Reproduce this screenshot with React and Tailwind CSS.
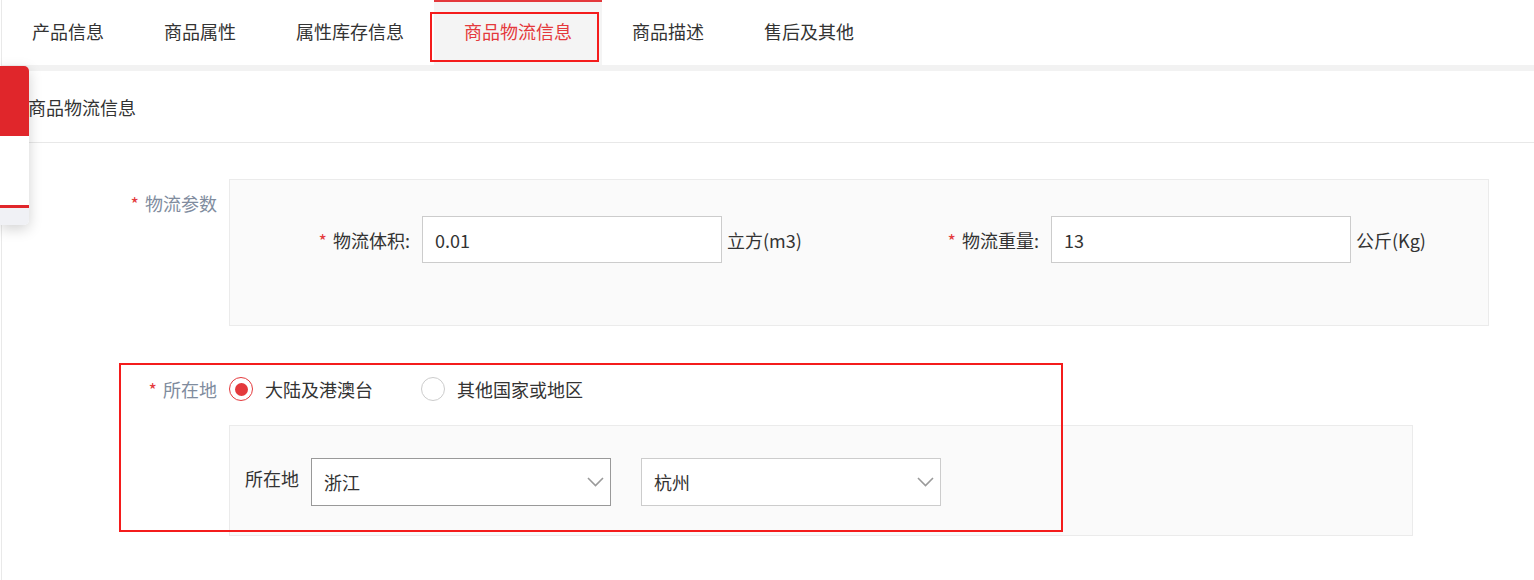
const tabs = ['产品信息', '商品属性', '属性库存信息', '商品物流信息', '商品描述', '售后及其他'];

function Chevron() {
  return (
    <svg width="17" height="10" viewBox="0 0 17 10" fill="none">
      <polyline points="1,1 8.5,8.5 16,1" stroke="#9a9a9a" strokeWidth="1.6" />
    </svg>
  );
}

function Req() {
  return <span className="text-[#e4393c] mr-[6px]">*</span>;
}

function Field({ label, value, unit }) {
  return (
    <div className="w-[629px] flex items-center">
      <div className="w-[180px] text-right text-[#333]">
        <Req />
        {label}:
      </div>
      <div className="ml-[12px] w-[300px] h-[47px] border border-[#cccccc] bg-white pl-[12px] flex items-center text-[#333]">
        {value}
      </div>
      <span className="ml-[5px] text-[#333]">{unit}</span>
    </div>
  );
}

function Select({ value, dark }) {
  return (
    <div
      className={`w-[300px] h-[48px] bg-white border flex items-center justify-between pl-[12px] pr-[6px] text-[#333] ${dark ? 'border-[#999999]' : 'border-[#cccccc]'}`}
    >
      <span>{value}</span>
      <Chevron />
    </div>
  );
}

export default function App() {
  return (
    <div
      className="relative w-[1534px] h-[580px] bg-white overflow-hidden text-[18px] leading-[24px]"
      style={{ fontFamily: '"Noto Sans CJK SC", "Noto Sans", sans-serif' }}
    >
      <div className="ml-px border-l border-[#e9e9e9] h-full">
        {/* tabs */}
        <div className="h-[65px] flex">
          {tabs.map((t, i) => (
            <div
              key={t}
              className={`h-full px-[30px] flex items-center pb-[4px] ${i === 3 ? 'bg-[#f4f4f4] text-[#e4393c] shadow-[inset_0_2px_0_#e4393c]' : 'text-[#333]'}`}
            >
              {t}
            </div>
          ))}
        </div>
        <div className="h-[6px] bg-[#f2f2f2]" />

        {/* section header */}
        <div className="h-[72px] flex items-center pl-[26px] border-b border-[#e8e8e8] text-[#333]">
          商品物流信息
        </div>

        {/* form */}
        <div className="pt-[36px]">
          <div className="flex">
            <div className="w-[215px] text-right pt-[12px] text-[#808c9e]">
              <Req />
              物流参数
            </div>
            <div className="ml-[12px] w-[1260px] h-[147px] border border-[#ebebeb] bg-[#fafafa] pt-[36px]">
              <div className="flex">
                <Field label="物流体积" value="0.01" unit="立方(m3)" />
                <Field label="物流重量" value="13" unit="公斤(Kg)" />
              </div>
            </div>
          </div>

          <div className="flex mt-[51px]">
            <div className="w-[215px] text-right text-[#808c9e]">
              <Req />
              所在地
            </div>
            <div className="ml-[12px]">
              <div className="flex items-center h-[24px] text-[#333]">
                <div className="w-[24px] h-[24px] rounded-full border border-[#e4393c] flex items-center justify-center">
                  <div className="w-[13px] h-[13px] rounded-full bg-[#e4393c]" />
                </div>
                <span className="ml-[12px]">大陆及港澳台</span>
                <div className="ml-[48px] w-[24px] h-[24px] rounded-full border border-[#cccccc] bg-white" />
                <span className="ml-[12px]">其他国家或地区</span>
              </div>
              <div className="mt-[24px] w-[1184px] h-[111px] border border-[#ebebeb] bg-[#fafafa] pt-[32px] pl-[15px] flex items-start">
                <span className="mt-[8px] text-[#333]">所在地</span>
                <div className="ml-[12px]">
                  <Select value="浙江" dark />
                </div>
                <div className="ml-[30px]">
                  <Select value="杭州" />
                </div>
              </div>
            </div>
          </div>
        </div>
      </div>

      {/* floating side panel */}
      <div className="absolute left-0 top-[66px] w-[29px] h-[159px] rounded-r-[5px] overflow-hidden shadow-[0_4px_14px_rgba(0,0,0,0.18)] flex flex-col">
        <div className="h-[70px] bg-[#e0262b]" />
        <div className="h-[69px] bg-white" />
        <div className="h-[3px] bg-[#e0262b]" />
        <div className="flex-1 bg-[#f0f1f5]" />
      </div>

      {/* annotation boxes */}
      <div className="absolute left-[430px] top-[12px] w-[169px] h-[50px] border-2 border-[#f41c1c]" />
      <div className="absolute left-[119px] top-[363px] w-[944px] h-[169px] border-2 border-[#f41c1c]" />
    </div>
  );
}
